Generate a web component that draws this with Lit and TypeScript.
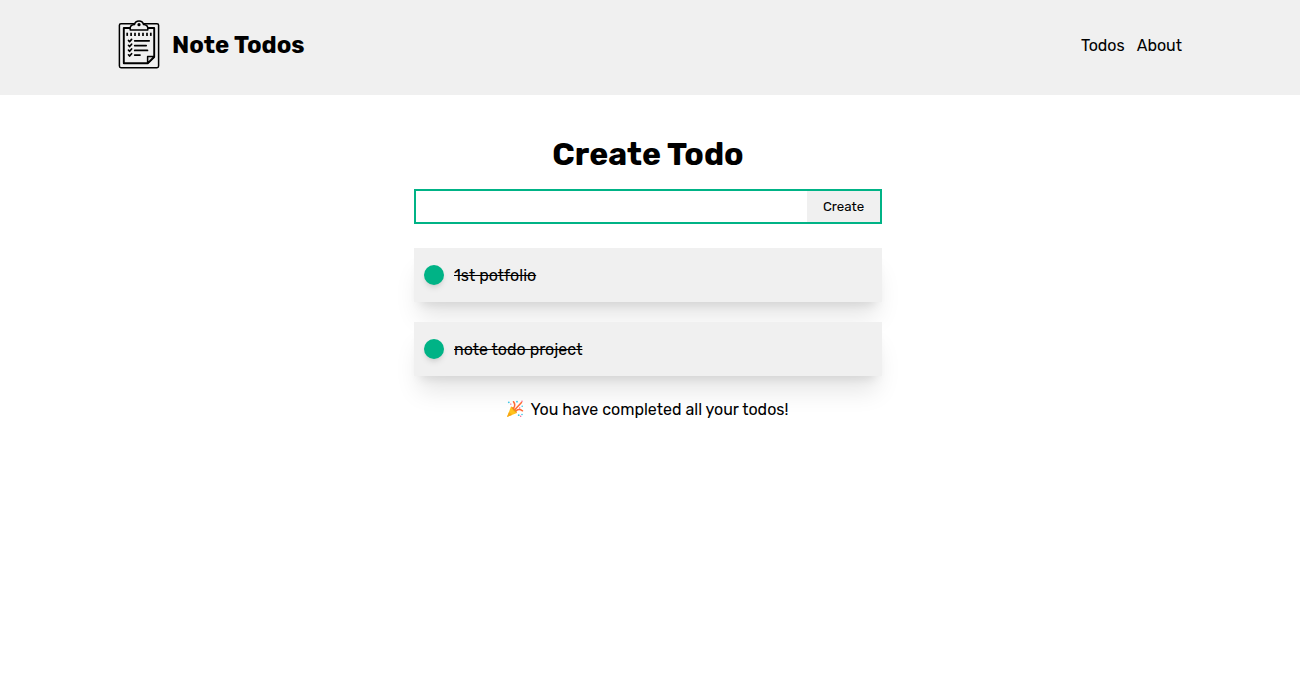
import { LitElement, html, css, svg } from "lit";
import { customElement, property, state } from "lit/decorators.js";

@customElement("clipboard-logo")
class ClipboardLogo extends LitElement {
  static styles = css`
    :host { display: block; width: 42px; height: 50px; }
    svg { display: block; }
  `;
  render() {
    return html`<svg width="42" height="50" viewBox="0 0 42 50" fill="none" stroke="#000" stroke-width="1.5" stroke-linejoin="round" stroke-linecap="round">
      <rect x="1.400" y="3.700" width="39.200" height="44" rx="1.600" />
      <path d="M13 8H5.800V43.200H30L36.200 37V8H29" stroke-width="1.900" />
      <path d="M29.600 43.200V36.500H36.200Z" fill="#d8d8d8" stroke-width="1.500" />
      <path d="M12.200 10V8.300C12.200 6 14.200 4.800 16.500 4.600C17 2.200 18.500 1 21 1S25 2.200 25.500 4.600C27.800 4.800 29.800 6 29.800 8.300V10Z" fill="#f0f0f0" stroke-width="1.500" />
      <circle cx="21" cy="4.700" r="1.600" fill="#000" stroke="none" />
      ${[9.2, 13.1, 17, 21, 25, 29, 32.8].map((x) => svg`<path d="M${x} 12.700v3.200" stroke-width="1.700" stroke-linecap="butt" />`)}
      ${[[20.5, 31.2], [25.3, 28.2], [30.1, 29.5], [34.8, 22]].map(
        ([y, end]) => svg`<path d="M10.500 ${y}l1.100 1.200 2-2.300M16.700 ${y + 0.3}H${end}" stroke-width="1.700" />`
      )}
    </svg>`;
  }
}

@customElement("party-popper")
class PartyPopper extends LitElement {
  static styles = css`
    :host { display: block; width: 18px; height: 18px; }
    svg { display: block; }
  `;
  render() {
    return html`<svg width="18" height="18" viewBox="0 0 18 18" fill="none" stroke-linecap="round">
      <path d="M1 17L5 6.500Q8.500 8.500 11 13Z" fill="#ffc21c" />
      <path d="M1 17L3 12L6 15Z" fill="#f7a614" />
      <path d="M5 6.500Q10 8 11 13Q7.500 11.500 5 6.500Z" fill="#e99a17" />
      <path d="M7.500 8.200Q10 5 7.500 1.700M9.200 9.200L15.500 2.500M10.300 10.600Q13 8.400 16.500 10.800" stroke="#ff6a35" stroke-width="1.500" />
      <g fill="#3cc5e6"><circle cx="2.800" cy="2.300" r=".9" /><circle cx="11" cy="1.700" r=".9" /><circle cx="16.200" cy="6.300" r=".8" /><circle cx="12.700" cy="15.200" r=".9" /><circle cx="16" cy="14.500" r=".8" /></g>
      <g fill="#f5558a"><circle cx="4.800" cy="4.100" r=".7" /><circle cx="16" cy="1.300" r=".7" /><circle cx="13.700" cy="8" r=".7" /><circle cx="14.700" cy="16.200" r=".7" /></g>
    </svg>`;
  }
}

interface Todo { title: string; done: boolean; }

@customElement("todo-item")
class TodoItem extends LitElement {
  @property({ attribute: false }) todo!: Todo;
  static styles = css`
    :host { display: block; }
    .card {
      display: flex; align-items: center; gap: 10px; height: 54px; padding: 0 10px;
      box-sizing: border-box; background: #f0f0f0;
      box-shadow: 0 20px 25px -5px rgba(0, 0, 0, 0.1), 0 8px 10px -6px rgba(0, 0, 0, 0.1);
    }
    .dot {
      width: 20px; height: 20px; border-radius: 50%; background: #00b386;
      box-shadow: 0 4px 6px -1px rgba(0, 0, 0, 0.1), 0 2px 4px -2px rgba(0, 0, 0, 0.1);
    }
    .title { text-decoration: line-through; line-height: 19px; }
  `;
  render() {
    return html`<div class="card"><div class="dot"></div><span class="title">${this.todo.title}</span></div>`;
  }
}

@customElement("app-root")
class AppRoot extends LitElement {
  @state() private todos: Todo[] = [
    { title: "1st potfolio", done: true },
    { title: "note todo project", done: true },
  ];
  static styles = css`
    :host { display: block; min-height: 676px; background: #fff; color: #000; font: 16px/19px Rubik, Roboto, sans-serif; }
    header { height: 95px; padding: 0 118px; box-sizing: border-box; background: #f0f0f0; display: flex; justify-content: space-between; }
    .brand { display: flex; align-items: flex-start; gap: 12px; padding-top: 20px; }
    .name { font-size: 24px; line-height: 28px; font-weight: 700; margin-top: 11px; }
    nav { display: flex; gap: 12px; padding-top: 36px; }
    main { width: 468px; margin-left: 414px; padding-top: 40px; }
    h1 { margin: 0 0 16px; font-size: 32px; line-height: 38px; font-weight: 700; text-align: center; }
    .form { display: flex; height: 35px; box-sizing: border-box; border: 2px solid #00b386; }
    input { flex: 1; min-width: 0; border: 0; outline: 0; background: #fff; font: inherit; padding: 0 10px; }
    button { width: 73px; border: 0; padding: 0; background: #f0f0f0; color: #000; font: 13.333px/16px Rubik, Roboto, sans-serif; }
    .list { display: grid; gap: 20px; margin-top: 24px; }
    .done { display: flex; justify-content: center; gap: 7px; margin-top: 24px; padding-right: 2px; }
  `;
  render() {
    return html`
      <header>
        <div class="brand"><clipboard-logo></clipboard-logo><span class="name">Note Todos</span></div>
        <nav><span>Todos</span><span>About</span></nav>
      </header>
      <main>
        <h1>Create Todo</h1>
        <div class="form"><input aria-label="Todo" /><button>Create</button></div>
        <div class="list">${this.todos.map((t) => html`<todo-item .todo=${t}></todo-item>`)}</div>
        <div class="done"><party-popper></party-popper><span>You have completed all your todos!</span></div>
      </main>
    `;
  }
}
